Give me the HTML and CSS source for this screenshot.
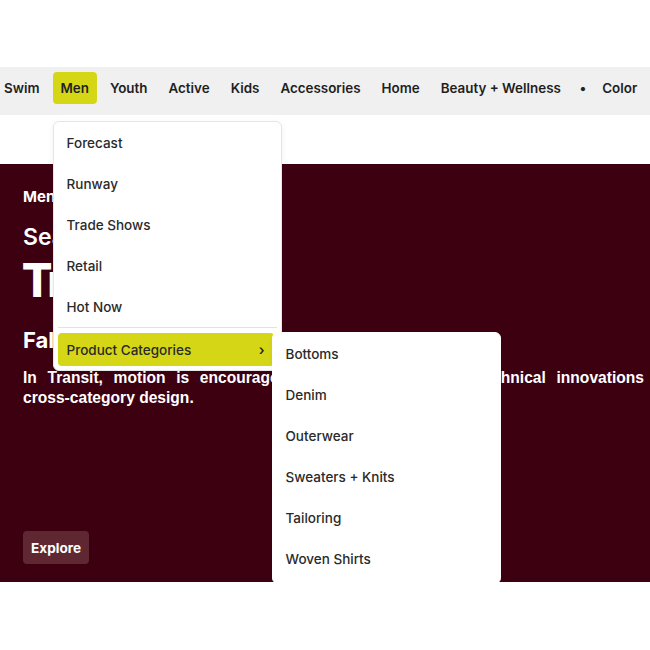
FILE: index.html
```html
<!DOCTYPE html>
<html lang="en">
<head>
  <meta charset="UTF-8" />
  <meta name="viewport" content="width=device-width, initial-scale=1.0" />
  <title>Men - Product Categories</title>
  <link rel="stylesheet" href="styles.css">
</head>
<body>
  <header class="topbar">
    <nav class="nav">
      <a class="nav-item">Swim</a>
      <div class="nav-item nav-item--open">
        <span>Men</span>
        <ul class="menu">
          <li class="menu-item">Forecast</li>
          <li class="menu-item">Runway</li>
          <li class="menu-item">Trade Shows</li>
          <li class="menu-item">Retail</li>
          <li class="menu-item menu-item--last">Hot Now</li>
          <li class="menu-divider"></li>
          <li class="menu-item menu-item--active">
            Product Categories
            <span class="chevron">&#8250;</span>
            <ul class="menu submenu">
              <li class="menu-item">Bottoms</li>
              <li class="menu-item">Denim</li>
              <li class="menu-item">Outerwear</li>
              <li class="menu-item">Sweaters + Knits</li>
              <li class="menu-item">Tailoring</li>
              <li class="menu-item menu-item--last">Woven Shirts</li>
            </ul>
          </li>
        </ul>
      </div>
      <a class="nav-item">Youth</a>
      <a class="nav-item">Active</a>
      <a class="nav-item">Kids</a>
      <a class="nav-item">Accessories</a>
      <a class="nav-item">Home</a>
      <a class="nav-item">Beauty + Wellness</a>
      <span class="nav-dot">&bull;</span>
      <a class="nav-item">Color</a>
    </nav>
  </header>

  <section class="hero">
    <div class="eyebrow">Men</div>
    <h2 class="season">Season Theme</h2>
    <h1 class="title">Transit</h1>
    <h3 class="subtitle">Fall/Winter 26/27</h3>
    <p class="lead">In Transit, motion is encouraged by utility details and technical innovations <span class="nowrap">cross-category</span> design.</p>
    <a class="explore">Explore</a>
  </section>
</body>
</html>
```

FILE: styles.css
```css
body {
  margin: 0;
  background: #ffffff;
  font-family: Inter, "Noto Sans", sans-serif;
  color: #222222;
  overflow: hidden;
}

.topbar {
  margin-top: 67px;
  background: #f0f0f0;
  height: 48px;
}

.nav {
  display: flex;
  align-items: center;
  gap: 5px;
  padding-top: 5px;
  margin-left: -4px;
  white-space: nowrap;
}

.nav-item {
  position: relative;
  display: flex;
  align-items: center;
  height: 32px;
  padding: 0 8px;
  border-radius: 4px;
  font-size: 13.4px;
  font-weight: 600;
  color: #1f1f1f;
}

.nav-item--open {
  background: #d5d716;
}

.nav-dot {
  padding: 0 3px 0 6px;
  font-size: 13.4px;
  font-weight: 700;
}

.menu {
  list-style: none;
  margin: 0;
  padding: 4px;
  background: #ffffff;
  border: 1px solid #e6e6e6;
  border-radius: 6px;
  box-shadow: 0 2px 6px rgba(0, 0, 0, 0.06);
  width: 219px;
  position: absolute;
  top: 49px;
  left: 0;
  z-index: 10;
}

.menu-item {
  position: relative;
  display: flex;
  align-items: center;
  height: 33px;
  padding: 0 9px;
  margin-bottom: 8px;
  border-radius: 4px;
  font-size: 13.5px;
  font-weight: 500;
  color: #2a2a2a;
}

.menu-item--last {
  margin-bottom: 4px;
}

.menu-divider {
  height: 1px;
  background: #e2e2e2;
  margin: 0 0 5px;
}

.menu-item--active {
  background: #d5d716;
  margin-bottom: 0;
  width: 198px;
}

.chevron {
  margin-left: auto;
  font-size: 14px;
  font-weight: 600;
}

.submenu {
  top: -1px;
  left: 214px;
  width: 219px;
  border-color: #ffffff;
}

.hero {
  margin-top: 49px;
  height: 376px;
  background: #3d0011;
  padding: 24px 6px 18px 23px;
  color: #ffffff;
  display: flex;
  flex-direction: column;
}

.eyebrow {
  font-size: 15px;
  font-weight: 700;
  line-height: 18px;
}

.season {
  margin: 17px 0 0;
  font-size: 23px;
  font-weight: 600;
  line-height: 28px;
}

.title {
  margin: 2px 0 0;
  font-family: "Liberation Sans Narrow", "DejaVu Sans Condensed", Inter, sans-serif;
  font-size: 46px;
  font-weight: 700;
  line-height: 56px;
}

.subtitle {
  margin: 17px 0 0;
  font-size: 22px;
  font-weight: 700;
  line-height: 28px;
}

.lead {
  margin: 14px 0 0;
  font-family: "Liberation Sans", Arial, sans-serif;
  font-size: 15.6px;
  font-weight: 700;
  line-height: 20px;
  text-align: justify;
}

.nowrap {
  white-space: nowrap;
}

.explore {
  margin-top: auto;
  align-self: flex-start;
  height: 33px;
  padding: 0 8px;
  display: flex;
  align-items: center;
  border-radius: 4px;
  background: #5e2731;
  font-size: 13.6px;
  font-weight: 700;
}
```
